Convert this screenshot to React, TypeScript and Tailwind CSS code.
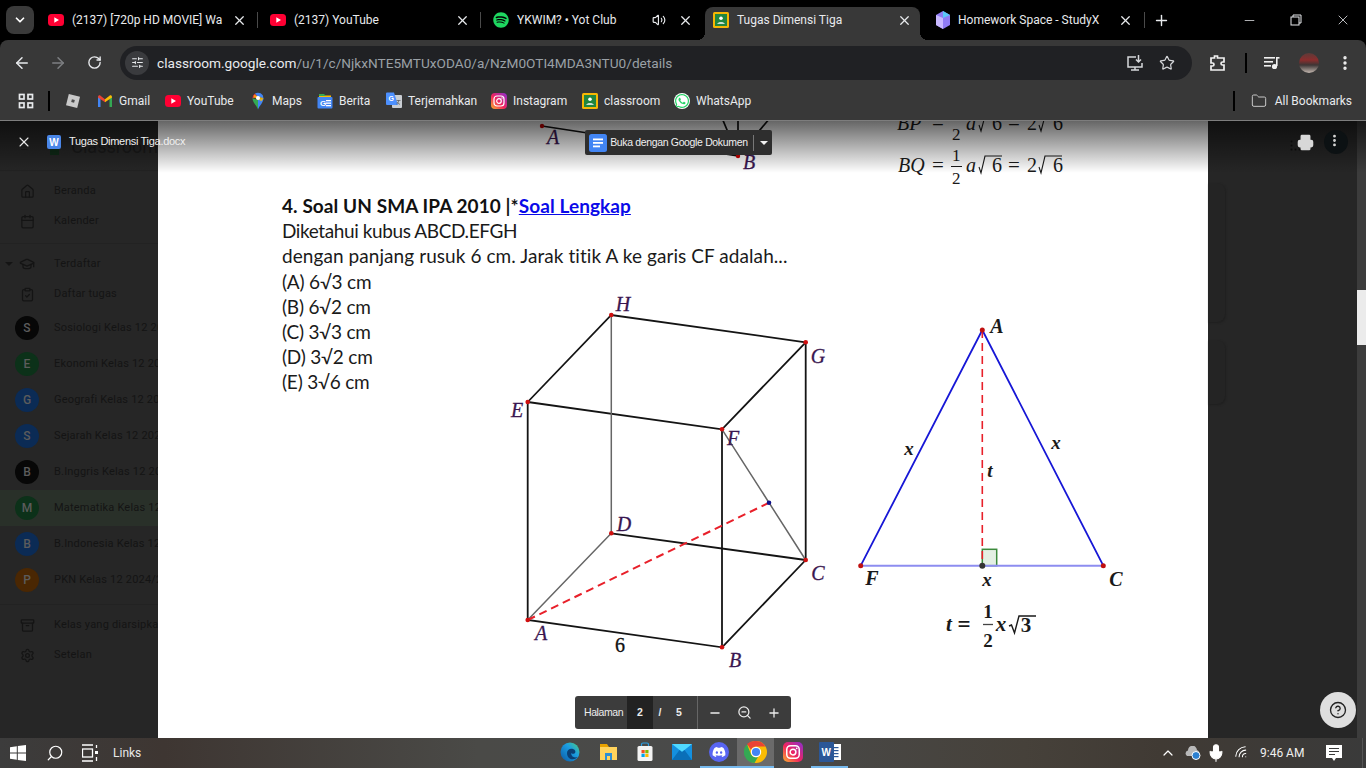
import { ArrowLeft, ArrowRight, Archive, Calendar, ChevronDown, ChevronUp, CircleHelp, ClipboardCheck, EllipsisVertical, Folder, GraduationCap, Home, Menu, Mic, Minus, Plus, Printer, RotateCw, Search, Settings, SlidersHorizontal, Star, Volume2, Wifi, X, ZoomOut } from 'lucide-react';
import { FaDiscord, FaSpotify, FaWhatsapp } from 'react-icons/fa';

function YouTubeIcon() {
  return (
    <svg width="16" height="16" viewBox="0 0 16 16" className="shrink-0">
      <rect x="0" y="2" width="16" height="12" rx="3.5" fill="#ff0033" />
      <path d="M6.3 5.2v5.6L11 8z" fill="#fff" />
    </svg>
  );
}

function InstaIcon({ size = 16 }: { size?: number }) {
  return (
    <svg width={size} height={size} viewBox="0 0 16 16" className="shrink-0">
      <defs>
        <linearGradient id="insta" x1="0" y1="1" x2="1" y2="0">
          <stop offset="0" stopColor="#fdb22c" />
          <stop offset="0.45" stopColor="#f0245e" />
          <stop offset="1" stopColor="#8a2fd0" />
        </linearGradient>
      </defs>
      <rect width="16" height="16" rx="4" fill="url(#insta)" />
      <rect x="3" y="3" width="10" height="10" rx="3" fill="none" stroke="#fff" strokeWidth="1.2" />
      <circle cx="8" cy="8" r="2.3" fill="none" stroke="#fff" strokeWidth="1.2" />
      <circle cx="11" cy="5" r="0.7" fill="#fff" />
    </svg>
  );
}

function ClassroomIcon({ size = 16 }: { size?: number }) {
  return (
    <svg width={size} height={size} viewBox="0 0 16 16" className="shrink-0">
      <rect width="16" height="16" rx="1.5" fill="#f6b704" />
      <rect x="2" y="2" width="12" height="12" fill="#21863f" />
      <circle cx="8" cy="6.2" r="1.8" fill="#fff" />
      <path d="M4.2 11.8c0-2.2 7.6-2.2 7.6 0z" fill="#fff" />
    </svg>
  );
}

function GmailIcon() {
  return (
    <svg width="16" height="14" viewBox="0 0 16 14" className="shrink-0">
      <path d="M1 13V2.5L3.5 3v10z" fill="#4285f4" />
      <path d="M15 13V2.5L12.5 3v10z" fill="#34a853" />
      <path d="M1 2.5c.6-1.4 1.7-1.4 2.5-.8L8 5.2v3L1 3.4z" fill="#ea4335" />
      <path d="M15 2.5c-.6-1.4-1.7-1.4-2.5-.8L8 5.2v3l7-4.8z" fill="#fbbc04" />
    </svg>
  );
}

function MapsIcon() {
  return (
    <svg width="16" height="18" viewBox="0 0 16 18" className="shrink-0">
      <path d="M8 17.5C6.8 13.8 2.5 10.6 2.5 6.2L8 8z" fill="#34a853" />
      <path d="M8 17.5c1.2-3.7 5.5-6.9 5.5-11.3L8 8z" fill="#4285f4" />
      <path d="M2.5 6.2A5.5 5.5 0 0 1 5 1.6L8 5z" fill="#ea4335" />
      <path d="M5 1.6a5.5 5.5 0 0 1 8.5 4.6L8 5z" fill="#4285f4" />
      <path d="M4 3l9.5 3.2-2 3-7.5-4z" fill="#fbbc04" opacity="0.85" />
      <circle cx="8" cy="6" r="2" fill="#fff" />
    </svg>
  );
}

function BeritaIcon() {
  return (
    <svg width="16" height="16" viewBox="0 0 16 16" className="shrink-0">
      <path d="M2 2.5h12v3H2z" fill="#fbbc04" />
      <path d="M2 1h5l2 2H2z" fill="#34a853" />
      <rect x="0.5" y="4" width="15" height="11.5" rx="1" fill="#4285f4" />
      <text x="3" y="13" fontSize="8" fontWeight="700" fill="#fff" fontFamily="'Liberation Sans',sans-serif">G</text>
      <rect x="9" y="7" width="5" height="1.3" fill="#fff" />
      <rect x="9" y="9.5" width="5" height="1.3" fill="#fff" />
      <rect x="9" y="12" width="5" height="1.3" fill="#fff" />
    </svg>
  );
}

function TranslateIcon() {
  return (
    <svg width="16" height="17" viewBox="0 0 16 17" className="shrink-0">
      <rect x="6" y="3" width="10" height="13" rx="1" fill="#c9cdd2" />
      <path d="M1 0.5h7L12 13H1a1 1 0 0 1-1-1V1.500a1 1 0 0 1 1-1z" fill="#4d90fe" />
      <text x="2.500" y="8.500" fontSize="7" fontWeight="700" fill="#fff" fontFamily="'Liberation Sans',sans-serif">G</text>
      <path d="M10.500 8.500h4M12.500 8v1c0 1.500-1 2.500-2 3M11 10c.5 1 1.500 2 3 2.300" stroke="#5f6368" strokeWidth="0.8" fill="none" />
    </svg>
  );
}

function RobloxIcon() {
  return (
    <svg width="16" height="16" viewBox="0 0 16 16" className="shrink-0">
      <path d="M3.800 1L15 3.800 12.200 15 1 12.200z" fill="#c9c9c9" />
      <rect x="6.500" y="6.500" width="3" height="3" fill="#4b4b4b" transform="rotate(14 8 8)" />
    </svg>
  );
}

function DocsIcon() {
  return (
    <svg width="18" height="18" viewBox="0 0 18 18" className="shrink-0">
      <rect width="18" height="18" rx="2.500" fill="#4285f4" />
      <rect x="4" y="4.500" width="10" height="1.800" fill="#fff" />
      <rect x="4" y="8" width="10" height="1.800" fill="#fff" />
      <rect x="4" y="11.500" width="7" height="1.800" fill="#fff" />
    </svg>
  );
}

function ChromeIcon() {
  return (
    <svg width="24" height="24" viewBox="0 0 24 24">
      <circle cx="12" cy="12" r="11" fill="#fbbc04" />
      <path d="M12 1a11 11 0 0 1 9.500 5.500H12a5.500 5.500 0 0 0-5 3.200L3 4a11 11 0 0 1 9-3z" fill="#ea4335" />
      <path d="M3 4.200A11 11 0 0 0 10.500 22.900l3.600-6.200a5.500 5.500 0 0 1-6.900-2z" fill="#34a853" />
      <circle cx="12" cy="12" r="5.200" fill="#fff" />
      <circle cx="12" cy="12" r="4.100" fill="#4285f4" />
    </svg>
  );
}

function EdgeIcon() {
  return (
    <svg width="20" height="20" viewBox="0 0 20 20" className="-ml-[2px]">
      <defs>
        <linearGradient id="edge" x1="0" y1="1" x2="1" y2="0">
          <stop offset="0" stopColor="#0c59a4" />
          <stop offset="0.6" stopColor="#1b9de2" />
          <stop offset="1" stopColor="#4fd17a" />
        </linearGradient>
      </defs>
      <circle cx="10" cy="10" r="9.500" fill="url(#edge)" />
      <path d="M7 11c0-3 3-5 6-4 2.500.8 3 3 1.800 4.200-1.200 1-3.800.6-3.800-.7 0 4 3 5.800 6.200 4.500-2 3.500-10.200 3.500-10.200-4z" fill="#0b3f74" />
    </svg>
  );
}

function FilesIcon() {
  return (
    <svg width="20" height="18" viewBox="0 0 20 18">
      <path d="M2 1h7l2 3H2z" fill="#e8a200" />
      <rect x="2" y="4" width="17" height="13" fill="#ffd35c" />
      <rect x="7" y="10" width="7" height="7" fill="#2d8fd5" />
      <rect x="9" y="13" width="3" height="4" fill="#ffd35c" />
    </svg>
  );
}

function StoreIcon() {
  return (
    <svg width="16" height="20" viewBox="0 0 16 20">
      <path d="M4.500 4V2.500a1.500 1.500 0 0 1 1.500-1.500h4a1.500 1.500 0 0 1 1.500 1.500V4" fill="none" stroke="#2aa0e6" strokeWidth="1.200" />
      <rect x="0.500" y="4" width="15" height="15" rx="1.500" fill="#f3f3f3" />
      <rect x="4.500" y="8" width="3.200" height="3.200" fill="#f25022" />
      <rect x="8.300" y="8" width="3.200" height="3.200" fill="#7fba00" />
      <rect x="4.500" y="11.800" width="3.200" height="3.200" fill="#00a4ef" />
      <rect x="8.300" y="11.800" width="3.200" height="3.200" fill="#ffb900" />
    </svg>
  );
}

function MailIcon() {
  return (
    <svg width="20" height="16" viewBox="0 0 20 16">
      <rect width="20" height="16" y="0" fill="#1490df" />
      <path d="M0 0h20L10 8z" fill="#50d9ff" />
      <path d="M0 16l7.500-10L10 8l2.500-2L20 16z" fill="#0a6fb8" />
    </svg>
  );
}

function WordIcon() {
  return (
    <svg width="22" height="20" viewBox="0 0 22 20">
      <rect x="9" y="2" width="13" height="16" fill="#fff" />
      <rect x="0" y="0" width="15" height="20" rx="1" fill="#2b5797" />
      <rect x="15" y="5" width="4.500" height="1.200" fill="#2b5797" />
      <rect x="15" y="8" width="4.500" height="1.200" fill="#2b5797" />
      <rect x="15" y="11" width="4.500" height="1.200" fill="#2b5797" />
      <rect x="15" y="14" width="4.500" height="1.200" fill="#2b5797" />
      <text x="2.500" y="14" fontSize="10" fontWeight="700" fill="#fff" fontFamily="'Liberation Sans',sans-serif">W</text>
    </svg>
  );
}

function WindowsIcon() {
  return (
    <svg width="16" height="16" viewBox="0 0 16 16">
      <path d="M0 2.200L6.800 1.200V7.500H0zM7.800 1L16 0V7.500H7.800zM0 8.500H6.800V14.800L0 13.800zM7.800 8.500H16V16L7.800 15z" fill="#fff" />
    </svg>
  );
}

function Tab({ icon, title, width }: { icon: React.ReactNode; title: string; width: string }) {
  return (
    <div className={`${width} h-6 mt-2 flex items-center pl-3 shrink-0`}>
      {icon}
      <span className="ml-2 flex-1 overflow-hidden whitespace-nowrap text-[12px] text-[#e8eaed]">{title}</span>
      <X size={15} className="text-[#e8eaed] ml-2 mr-[10px] shrink-0" strokeWidth={2} />
      <div className="w-px h-4 bg-[#4a4a4a] shrink-0" />
    </div>
  );
}

function TabStrip() {
  return (
    <div className="h-10 bg-black flex items-start shrink-0">
      <div className="w-7 h-7 ml-[6px] mr-[2px] mt-[6px] bg-[#3a3a3a] rounded-lg flex items-center justify-center shrink-0">
        <ChevronDown size={14} className="text-white" strokeWidth={3} />
      </div>
      <Tab width="w-[222px]" icon={<YouTubeIcon />} title="(2137) [720p HD MOVIE] Wa" />
      <Tab width="w-[223px]" icon={<YouTubeIcon />} title="(2137) YouTube" />
      <div className="w-[224px] h-6 mt-2 flex items-center pl-3 pr-[12px] shrink-0">
        <FaSpotify size={16} className="text-[#1ed760] shrink-0" />
        <span className="ml-2 flex-1 whitespace-nowrap text-[12px] text-[#e8eaed]">YKWIM? • Yot Club</span>
        <Volume2 size={14} className="text-[#e8eaed] mr-[12px]" />
        <X size={15} className="text-[#e8eaed]" strokeWidth={2} />
      </div>
      <div className="relative w-[215px] h-[33px] mt-[7px] pb-[7px] bg-[#383838] rounded-t-lg flex items-center pl-2 pr-[8px] shrink-0">
        <div className="absolute -left-2 bottom-0 w-2 h-2 bg-[radial-gradient(circle_at_0_0,transparent_8px,#383838_8px)]" />
        <div className="absolute -right-2 bottom-0 w-2 h-2 bg-[radial-gradient(circle_at_100%_0,transparent_8px,#383838_8px)]" />
        <ClassroomIcon />
        <span className="ml-2 flex-1 whitespace-nowrap text-[12px] text-[#e8eaed]">Tugas Dimensi Tiga</span>
        <X size={15} className="text-[#e8eaed]" strokeWidth={2} />
      </div>
      <div className="w-[222px] h-6 mt-2 ml-[3px] flex items-center pl-3 shrink-0">
        <svg width="16" height="18" viewBox="0 0 16 18" className="shrink-0">
          <path d="M8 0l7 4v10l-7 4-7-4V4z" fill="#8f7bf5" />
          <path d="M8 0l7 4-7 3z" fill="#5ac8fa" />
          <path d="M1 4l7 3v11l-7-4z" fill="#c8b8ff" />
        </svg>
        <span className="ml-[7px] flex-1 whitespace-nowrap text-[12px] text-[#e8eaed]">Homework Space - StudyX</span>
        <X size={15} className="text-[#e8eaed] mr-[11px]" strokeWidth={2} />
        <div className="w-px h-4 bg-[#4a4a4a] shrink-0" />
      </div>
      <div className="h-6 mt-2 flex items-center ml-[8px]">
        <Plus size={17} className="text-[#e8eaed]" strokeWidth={2} />
      </div>
      <div className="h-6 mt-2 flex items-center ml-auto mr-[15px] gap-[33px] text-[#e8eaed]">
        <Minus size={15} strokeWidth={1.2} />
        <svg width="12" height="12" viewBox="0 0 12 12" fill="none" stroke="#e8eaed" strokeWidth="1">
          <rect x="1" y="3" width="8" height="8" />
          <path d="M3 3V1h8v8H9" />
        </svg>
        <X size={16} strokeWidth={1.2} />
      </div>
    </div>
  );
}

function Toolbar() {
  return (
    <div className="h-[45px] bg-[#383838] rounded-t-lg flex items-center shrink-0 pl-[13px]">
      <ArrowLeft size={18} className="text-[#e8eaed]" strokeWidth={2} />
      <ArrowRight size={18} className="text-[#7d7f82] ml-[18px]" strokeWidth={2} />
      <RotateCw size={15} className="text-[#e8eaed] ml-[20px]" strokeWidth={2.2} />
      <div className="w-[1072px] h-[34px] ml-[18px] bg-[#202124] rounded-full flex items-center pl-[5px] pr-[17px]">
        <div className="w-6 h-6 rounded-full bg-[#3a3b3e] flex items-center justify-center">
          <SlidersHorizontal size={13} className="text-[#e8eaed]" />
        </div>
        <div className="ml-2 mt-[1px] text-[13.65px] whitespace-nowrap text-[#e8eaed]">
          classroom.google.com<span className="text-[#9aa0a6]">/u/1/c/NjkxNTE5MTUxODA0/a/NzM0OTI4MDA3NTU0/details</span>
        </div>
        <svg width="18" height="18" viewBox="0 0 18 18" fill="none" stroke="#d5d7da" strokeWidth="1.500" className="ml-auto">
          <path d="M10 3H2v10h14V9M9 13v3M5 16h8M12.500 1v7M10 5.500l2.500 2.500L15 5.500" />
        </svg>
        <Star size={16} className="text-[#d5d7da] ml-[15px]" strokeWidth={1.800} />
      </div>
      <svg width="16" height="18" viewBox="0 0 16 18" fill="none" stroke="#f1f1f1" strokeWidth="1.700" className="ml-[18px]">
        <path d="M1 4h3.500V2h3v2H14v4h-1.500a1.500 1.500 0 0 0 0 3H14v5H1v-4h1.500a1.500 1.500 0 0 0 0-3H1z" />
      </svg>
      <div className="w-[2px] h-5 bg-black ml-[19px]" />
      <svg width="16" height="14" viewBox="0 0 16 14" className="ml-[17px]" fill="#f1f1f1">
        <rect x="0" y="1" width="11" height="1.600" />
        <rect x="0" y="5" width="9" height="1.600" />
        <rect x="0" y="9" width="7" height="1.600" />
        <rect x="12" y="1" width="3.500" height="1.600" />
        <rect x="12" y="1" width="1.600" height="9" />
        <circle cx="10.500" cy="10.500" r="2.600" />
      </svg>
      <div className="w-5 h-5 ml-[19px] rounded-full bg-[linear-gradient(180deg,#5d3a38_0%,#8a2d2d_35%,#3d3535_60%,#c4b8b0_100%)]" />
      <EllipsisVertical size={18} className="text-[#f1f1f1] ml-[17px]" strokeWidth={2.500} />
    </div>
  );
}

function BookmarkItem({ width, icon, label }: { width: string; icon: React.ReactNode; label: string }) {
  return (
    <div className={`${width} flex items-center gap-[6px] shrink-0`}>
      {icon}
      <span className="text-[12px] text-[#e8eaed] whitespace-nowrap">{label}</span>
    </div>
  );
}

function BookmarkBar() {
  return (
    <div className="h-[35px] bg-[#383838] flex items-center shrink-0 pl-[18px] pb-[4px]">
      <svg width="16" height="16" viewBox="0 0 16 16" fill="none" stroke="#e8eaed" strokeWidth="1.700" className="shrink-0">
        <rect x="1.500" y="1.500" width="4.500" height="4.500" />
        <rect x="10" y="1.500" width="4.500" height="4.500" />
        <rect x="1.500" y="10" width="4.500" height="4.500" />
        <rect x="10" y="10" width="4.500" height="4.500" />
      </svg>
      <div className="w-[2px] h-5 bg-black ml-[14px] mr-[15px]" />
      <div className="w-[32px] shrink-0"><RobloxIcon /></div>
      <BookmarkItem width="w-[68px]" icon={<GmailIcon />} label="Gmail" />
      <BookmarkItem width="w-[85px]" icon={<YouTubeIcon />} label="YouTube" />
      <BookmarkItem width="w-[67px]" icon={<MapsIcon />} label="Maps" />
      <BookmarkItem width="w-[69px]" icon={<BeritaIcon />} label="Berita" />
      <BookmarkItem width="w-[105px]" icon={<TranslateIcon />} label="Terjemahkan" />
      <BookmarkItem width="w-[91px]" icon={<InstaIcon />} label="Instagram" />
      <BookmarkItem width="w-[92px]" icon={<ClassroomIcon />} label="classroom" />
      <BookmarkItem width="w-[90px]" icon={<FaWhatsapp size={16} className="text-[#25d366] shrink-0 bg-white rounded-full" />} label="WhatsApp" />
      <div className="ml-auto flex items-center pr-[14px]">
        <div className="w-[2px] h-5 bg-black mr-[16px]" />
        <Folder size={16} className="text-[#c8c8c8] mr-[8px]" strokeWidth={1.500} />
        <span className="text-[12px] text-[#e8eaed] whitespace-nowrap">All Bookmarks</span>
      </div>
    </div>
  );
}

const courses = [
  { letter: 'S', name: 'Sosiologi Kelas 12 2024/2025', bg: 'bg-[#070707]', row: '' },
  { letter: 'E', name: 'Ekonomi Kelas 12 2024/2025', bg: 'bg-[#0c3119]', row: '' },
  { letter: 'G', name: 'Geografi Kelas 12 2024/2025', bg: 'bg-[#0b2b55]', row: '' },
  { letter: 'S', name: 'Sejarah Kelas 12 2024/2025', bg: 'bg-[#0b2b55]', row: '' },
  { letter: 'B', name: 'B.Inggris Kelas 12 2024/2025', bg: 'bg-[#070707]', row: '' },
  { letter: 'M', name: 'Matematika Kelas 12 2024/2025', bg: 'bg-[#0c3119]', row: 'bg-[#293029]' },
  { letter: 'B', name: 'B.Indonesia Kelas 12 2024/2025', bg: 'bg-[#0b2b55]', row: '' },
  { letter: 'P', name: 'PKN Kelas 12 2024/2025', bg: 'bg-[#4a2703]', row: '' },
];

function NavRow({ icon, label, caret }: { icon: React.ReactNode; label: string; caret?: boolean }) {
  return (
    <div className="relative h-[30px] flex items-center shrink-0">
      {caret && <div className="absolute left-[5px] top-[13px] w-0 h-0 border-l-[4px] border-r-[4px] border-t-[4px] border-l-transparent border-r-transparent border-t-[#141414]" />}
      <div className="w-[54px] shrink-0 flex justify-center text-[#141414]">{icon}</div>
      <span className="text-[11px] tracking-[0.2px] text-[#141414] whitespace-nowrap">{label}</span>
    </div>
  );
}

function Sidebar() {
  return (
    <div className="w-[158px] shrink-0 overflow-hidden bg-[#262626] flex flex-col">
      <div className="h-[50px] border-b border-[#222] flex items-center shrink-0 pt-[2px] pl-[20px]">
        <Menu size={14} className="text-[#181818]" />
        <div className="w-4 h-4 bg-[#0f2b17] ml-[21px]" />
        <span className="text-[18px] text-[#1a1a1a] ml-[12px]">Classroom</span>
      </div>
      <div className="pt-[5px] pb-[7px] border-b border-[#222]">
        <NavRow icon={<Home size={15} />} label="Beranda" />
        <NavRow icon={<Calendar size={15} />} label="Kalender" />
      </div>
      <div className="pt-[5px] pb-[6px] border-b border-[#222]">
        <NavRow caret icon={<GraduationCap size={16} />} label="Terdaftar" />
        <NavRow icon={<ClipboardCheck size={15} />} label="Daftar tugas" />
        <div className="h-[1px]" />
        {courses.map((course) => (
          <div key={course.name + course.letter} className={`h-9 flex items-center pl-[15px] ${course.row}`}>
            <div className={`w-6 h-6 rounded-full shrink-0 flex items-center justify-center text-[12px] font-medium text-[#5c5c5c] ${course.bg}`}>{course.letter}</div>
            <span className="ml-[15px] text-[11px] tracking-[0.2px] text-[#141414] whitespace-nowrap">{course.name}</span>
          </div>
        ))}
      </div>
      <div className="pt-[5px]">
        <NavRow icon={<Archive size={15} />} label="Kelas yang diarsipkan" />
        <NavRow icon={<Settings size={15} />} label="Setelan" />
      </div>
    </div>
  );
}

const mathFont = "'Liberation Serif',serif";

function TopFigures() {
  return (
    <svg width="1050" height="69" viewBox="158 121 1050 69" className="block shrink-0">
      <g fontFamily={mathFont}>
        <path d="M542 126L738 156M722 118L738 156M738 118V156M770 118L738 156" stroke="#111" strokeWidth="1.700" fill="none" />
        <circle cx="542" cy="126" r="2.200" fill="#c00" />
        <circle cx="738" cy="156" r="2.200" fill="#c00" />
        <text x="553" y="144" textAnchor="middle" fontSize="20" fontStyle="italic" fill="#3a1650" stroke="#3a1650" strokeWidth="0.300">A</text>
        <text x="749" y="169" textAnchor="middle" fontSize="20" fontStyle="italic" fill="#3a1650" stroke="#3a1650" strokeWidth="0.300">B</text>
        <g fill="#1a1a1a" fontSize="20">
          <text x="897" y="130" fontStyle="italic">BP</text>
          <text x="932" y="130" fontSize="21">=</text>
          <text x="952" y="140" fontSize="17">2</text>
          <text x="966" y="130" fontStyle="italic">a</text>
          <text x="992" y="130">6</text>
          <text x="1008" y="130" fontSize="21">=</text>
          <text x="1027" y="130">2</text>
          <text x="1053" y="130">6</text>
          <text x="898" y="172" fontStyle="italic">BQ</text>
          <text x="932" y="172" fontSize="21">=</text>
          <text x="952" y="161" fontSize="17">1</text>
          <text x="952" y="184" fontSize="17">2</text>
          <text x="966" y="172" fontStyle="italic">a</text>
          <text x="992" y="172">6</text>
          <text x="1008" y="172" fontSize="21">=</text>
          <text x="1027" y="172">2</text>
          <text x="1053" y="172">6</text>
        </g>
        <path d="M951 166.500h11M979 167l2 6 4-17h17M1039 167l2 6 4-17h17M979 125l2 6 4-15h17M1039 125l2 6 4-15h17" stroke="#1a1a1a" strokeWidth="1.100" fill="none" />
      </g>
    </svg>
  );
}

function CubeFigure() {
  return (
    <svg width="340" height="390" viewBox="500 290 340 390" className="block shrink-0 mt-[21px]">
      <g stroke="#141414" strokeWidth="1.800" fill="none" strokeLinecap="round">
        <path d="M527.700 402L611.300 315L805.700 342.300L722 429.300Z" />
        <path d="M527.700 402V620L722 647.300V429.300M805.700 342.300V560L722 647.300" />
        <path d="M611.300 533.300L805.700 560" />
      </g>
      <path d="M611.300 315V533.300L527.700 620M722 429.300L805.700 560" stroke="#666" strokeWidth="1.500" fill="none" />
      <path d="M527.700 620L769 502.700" stroke="#e8202a" strokeWidth="2" strokeDasharray="8 5" fill="none" />
      {[[611.3, 315], [805.7, 342.3], [527.7, 402], [722, 429.3], [611.3, 533.3], [805.7, 560], [527.7, 620], [722, 647.3]].map(([x, y]) => (
        <circle key={`${x}-${y}`} cx={x} cy={y} r="2.300" fill="#d01010" />
      ))}
      <circle cx="769" cy="502.700" r="2.300" fill="#10108a" />
      <g fontFamily={mathFont} fontStyle="italic" fontSize="20" fill="#3a1650" stroke="#3a1650" strokeWidth="0.300" textAnchor="middle">
        <text x="623" y="311">H</text>
        <text x="818" y="363">G</text>
        <text x="517" y="417">E</text>
        <text x="733" y="445">F</text>
        <text x="624" y="531">D</text>
        <text x="818" y="580">C</text>
        <text x="541" y="640">A</text>
        <text x="735" y="667">B</text>
        <text x="620" y="652" fontStyle="normal" fill="#111" stroke="#111" fontSize="20">6</text>
      </g>
    </svg>
  );
}

function TriangleFigure() {
  return (
    <svg width="300" height="350" viewBox="840 310 300 350" className="block shrink-0 mt-[41px]">
      <rect x="982.300" y="549.300" width="14.400" height="16.400" fill="#e3efe3" stroke="#3c8a3c" strokeWidth="1.500" />
      <path d="M860.700 565.700H1103.300" stroke="#8d8df0" strokeWidth="2" />
      <path d="M860.700 565.700L982.300 330L1103.300 565.700" stroke="#1717d6" strokeWidth="1.800" fill="none" />
      <path d="M982.300 330V565.700" stroke="#e8202a" strokeWidth="1.600" strokeDasharray="8 5" />
      <circle cx="982.300" cy="330" r="2.500" fill="#c01010" />
      <circle cx="860.700" cy="565.700" r="2.500" fill="#c01010" />
      <circle cx="1103.300" cy="565.700" r="2.500" fill="#c01010" />
      <circle cx="982.300" cy="565.700" r="3" fill="#333" />
      <g fontFamily={mathFont} fontStyle="italic" fontWeight="700" fontSize="20" fill="#1a1a1a" textAnchor="middle">
        <text x="997" y="333">A</text>
        <text x="872" y="585">F</text>
        <text x="1116" y="586">C</text>
        <text x="909" y="455" fontSize="19">x</text>
        <text x="1056" y="449" fontSize="19">x</text>
        <text x="990" y="477" fontSize="19">t</text>
        <text x="987" y="586" fontSize="19">x</text>
        <text x="949" y="631" fontSize="21">t</text>
        <text x="964" y="632" fontSize="23" fontStyle="normal">=</text>
        <text x="988" y="618" fontSize="19" fontStyle="normal">1</text>
        <text x="988" y="647" fontSize="19" fontStyle="normal">2</text>
        <text x="1001" y="631" fontSize="21">x</text>
        <text x="1026" y="632" fontSize="21" fontStyle="normal">3</text>
      </g>
      <path d="M983 624.500h10" stroke="#444" strokeWidth="1.300" />
      <path d="M1009 626l2.500-1 3 8 4.500-17h17" stroke="#1a1a1a" strokeWidth="1.400" fill="none" />
    </svg>
  );
}

function PageSheet() {
  return (
    <div className="w-[1050px] shrink-0 bg-white overflow-hidden flex flex-col">
      <TopFigures />
      <div className="pl-[124px] pt-[3px] font-['Lato',sans-serif] text-[19px] leading-[25.2px] text-[#1a1a1a]">
        <div className="font-bold text-[#111] tracking-[0.08px]">
          4. Soal UN SMA IPA 2010 |*<span className="text-[#0a0ae8] underline">Soal Lengkap</span>
        </div>
        <div className="tracking-[-0.4px]">Diketahui kubus ABCD.EFGH</div>
        <div className="tracking-[0.07px]">dengan panjang rusuk 6 cm. Jarak titik A ke garis CF adalah...</div>
        <div className="flex items-start">
          <div className="w-[218px] shrink-0 tracking-[-0.2px]">
            <div>(A) 6√3 cm</div>
            <div>(B) 6√2 cm</div>
            <div>(C) 3√3 cm</div>
            <div>(D) 3√2 cm</div>
            <div>(E) 3√6 cm</div>
          </div>
          <CubeFigure />
          <TriangleFigure />
        </div>
      </div>
    </div>
  );
}

function RightPanel() {
  return (
    <div className="flex-1 flex bg-[#262626]">
      <div className="flex-1 pt-[62px] flex flex-col">
        <div className="w-[17px] h-[139px] bg-[#242424] rounded-r-lg shadow-[1px_1px_2px_#1f1f1f]" />
        <div className="w-[17px] h-[64px] mt-[18px] bg-[#242424] rounded-r-lg shadow-[1px_1px_2px_#1f1f1f]" />
      </div>
      <div className="w-[9px] bg-[#3c3c3c] pt-[169px]">
        <div className="h-[55px] bg-[#ebebeb]" />
      </div>
    </div>
  );
}

function ViewerHeader() {
  return (
    <div className="absolute left-0 right-0 top-0 h-[52px] bg-[linear-gradient(180deg,rgba(0,0,0,0.6)_0%,rgba(0,0,0,0)_100%)] flex items-start pt-[9px]">
      <X size={16} className="text-[#e8e8e8] ml-[16px] mt-[4px]" strokeWidth={1.600} />
      <div className="w-[14px] h-[14px] ml-[15px] mt-[5px] rounded-[2px] bg-[#4a86e8] flex items-center justify-center text-[10px] font-bold text-white font-['Liberation_Sans',sans-serif]">W</div>
      <span className="ml-2 mt-[3px] text-[11px] tracking-[-0.3px] text-[#f0f0f0] whitespace-nowrap font-['Liberation_Sans',sans-serif]">Tugas Dimensi Tiga.docx</span>
      <div className="ml-[400px] w-[187px] h-[25px] bg-[#2e2e2e] rounded-[2px] flex items-center pl-1 font-['Liberation_Sans',sans-serif]">
        <DocsIcon />
        <span className="ml-[3px] w-[137px] text-[10.500px] tracking-[-0.35px] text-[#f0f0f0] whitespace-nowrap">Buka dengan Google Dokumen</span>
        <div className="w-px h-4 bg-[#777] ml-[6px]" />
        <div className="ml-[6px] w-0 h-0 border-l-[4px] border-r-[4px] border-t-[4px] border-l-transparent border-r-transparent border-t-[#f0f0f0]" />
      </div>
      <div className="ml-auto mr-[18px] flex items-center">
        <svg width="12" height="12" viewBox="0 0 12 12" fill="#0a0a0a" className="-mr-[5px] mt-[7px]">
          <circle cx="1.500" cy="1.500" r="1" /><circle cx="1.500" cy="5.500" r="1" /><circle cx="1.500" cy="9.500" r="1" />
          <circle cx="5.500" cy="9.500" r="1" /><circle cx="9.500" cy="9.500" r="1" />
        </svg>
        <Printer size={17} className="relative text-[#d8d8d8] fill-[#d8d8d8] stroke-[#d8d8d8]" />
        <div className="relative w-6 h-6 ml-[10px] rounded-full bg-[#0c1113] flex items-center justify-center">
          <EllipsisVertical size={15} className="absolute left-[3px] top-[3px] text-[#d8d8d8]" strokeWidth={2.500} />
        </div>
      </div>
    </div>
  );
}

function PageControls() {
  return (
    <div className="absolute left-[575px] bottom-[9px] h-[33px] w-[216px] bg-[#3c3c3c] rounded-[3px] flex items-center text-[#ececec] font-['Liberation_Sans',sans-serif]">
      <span className="ml-[9px] w-[43px] text-[10.500px] tracking-[-0.4px] whitespace-nowrap">Halaman</span>
      <div className="w-[26px] h-full bg-[#222] flex items-center justify-center text-[10.500px] font-bold">2</div>
      <span className="w-[14px] text-center text-[10.500px] font-bold">/</span>
      <span className="w-[24px] text-center text-[10.500px] font-bold">5</span>
      <div className="w-px h-full bg-[#666] ml-[6px]" />
      <Minus size={14} className="ml-[10px]" strokeWidth={2.200} />
      <ZoomOut size={15} className="ml-[15px]" strokeWidth={2} />
      <Plus size={14} className="ml-[15px]" strokeWidth={2.200} />
    </div>
  );
}

function Viewer() {
  return (
    <div className="relative h-[618px] flex border-t border-[#7d7d7d] overflow-hidden shrink-0">
      <Sidebar />
      <PageSheet />
      <RightPanel />
      <ViewerHeader />
      <PageControls />
      <div className="absolute left-[1320px] bottom-[10px] w-9 h-9 rounded-full bg-[#dedede] flex items-center justify-center">
        <CircleHelp size={18} className="text-[#222]" strokeWidth={1.800} />
      </div>
    </div>
  );
}

const taskIcons = [
  { key: 'edge', icon: <EdgeIcon />, active: false, open: false },
  { key: 'files', icon: <FilesIcon />, active: false, open: false },
  { key: 'store', icon: <StoreIcon />, active: false, open: false },
  { key: 'mail', icon: <MailIcon />, active: false, open: false },
  { key: 'discord', icon: <div className="w-5 h-5 rounded-full bg-[#5865f2] flex items-center justify-center"><FaDiscord size={14} className="text-white" /></div>, active: false, open: true },
  { key: 'chrome', icon: <ChromeIcon />, active: true, open: true },
  { key: 'insta', icon: <InstaIcon size={20} />, active: false, open: false },
  { key: 'word', icon: <WordIcon />, active: false, open: true },
];

function Taskbar() {
  return (
    <div className="h-[30px] shrink-0 flex items-stretch text-white bg-[linear-gradient(90deg,#3c3c3c_0%,#3e3632_12%,#4a4a47_35%,#494a4a_55%,#46413a_75%,#403a34_85%,#3a3a3a_100%)]">
      <div className="w-[552px] shrink-0 flex items-center pl-[10px]">
        <WindowsIcon />
        <Search size={18} className="ml-[20px] -scale-x-100" strokeWidth={1.600} />
        <svg width="16" height="18" viewBox="0 0 16 18" fill="none" stroke="#fff" strokeWidth="1.300" className="ml-[18px]">
          <path d="M0 1h11M0 17h11" />
          <rect x="0.500" y="5" width="10" height="8" />
          <rect x="13" y="7" width="3" height="3" fill="#fff" stroke="none" />
          <path d="M14.500 1v3M14.500 13v4" />
        </svg>
        <span className="ml-[15px] text-[12px] text-[#e8e8e8]">Links</span>
      </div>
      {taskIcons.map((item) => (
        <div key={item.key} className={`w-[37px] shrink-0 flex items-center justify-center border-b-[2px] ${item.active ? 'bg-[#6a6a6a]' : ''} ${item.open ? 'border-[#76b9ed]' : 'border-transparent'}`}>
          {item.icon}
        </div>
      ))}
      <div className="ml-auto flex items-center pr-[3px]">
        <ChevronUp size={16} strokeWidth={1.800} />
        <svg width="16" height="14" viewBox="0 0 16 14" className="ml-[9px]">
          <path d="M2 10a3 3 0 0 1 1-5.500A4.500 4.500 0 0 1 12 4a3.500 3.500 0 0 1 1 6z" fill="#b8b8b8" />
          <circle cx="11" cy="9.500" r="4" fill="#2a7fd0" stroke="#fff" strokeWidth="1" />
        </svg>
        <Mic size={20} className="ml-[5px]" fill="#fff" strokeWidth={1.300} />
        <Wifi size={16} className="ml-[8px] -rotate-45" strokeWidth={1.600} />
        <span className="ml-[10px] w-[45px] text-[12px] text-[#f0f0f0] whitespace-nowrap">9:46 AM</span>
        <svg width="16" height="17" viewBox="0 0 16 17" className="ml-[21px]">
          <path d="M0 0h16v13h-6l-2 3-2-3H0z" fill="#fff" />
          <path d="M3 3.500h10M3 6.500h10M3 9.500h6" stroke="#3a3a3a" strokeWidth="1" />
        </svg>
        <div className="w-px h-full bg-[#555] ml-[20px]" />
      </div>
    </div>
  );
}

export default function App() {
  return (
    <div className="w-[1366px] h-[768px] overflow-hidden flex flex-col bg-black font-['Roboto',sans-serif]">
      <TabStrip />
      <Toolbar />
      <BookmarkBar />
      <Viewer />
      <Taskbar />
    </div>
  );
}
